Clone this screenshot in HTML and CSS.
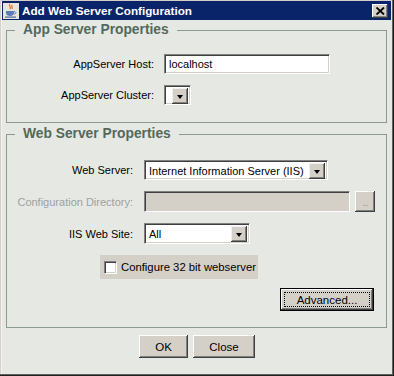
FILE: index.html
```html
<!DOCTYPE html>
<html>
<head>
<meta charset="utf-8">
<link rel="stylesheet" href="styles.css">
</head>
<body>
<div class="window">
  <div class="titlebar">
    <svg class="app-icon" width="16" height="16" viewBox="0 0 16 16">
      <rect x="0" y="0" width="16" height="16" fill="#e8e4dc"/>
      <path d="M7 1 C5 3 9 4 7 6 M9 2 C8 3.5 10 4.5 9 6" stroke="#e0701c" stroke-width="1.2" fill="none"/>
      <path d="M3 8 H11 V10 C11 12 9 13 7 13 C5 13 3 12 3 10 Z" fill="#5a7ab8"/>
      <path d="M11 8.5 C13.5 8.5 13.5 11 11 11" stroke="#5a7ab8" stroke-width="1" fill="none"/>
      <rect x="2" y="13.5" width="11" height="1.2" fill="#4a66a8"/>
    </svg>
    <span class="title">Add Web Server Configuration</span>
    <span class="close-btn"><svg width="9" height="8" viewBox="0 0 9 8"><path d="M0.5 0.5 L8 7.5 M8 0.5 L0.5 7.5" stroke="#000" stroke-width="1.8"/></svg></span>
  </div>
  <div class="body">
    <fieldset class="group group-app">
      <legend>App Server Properties</legend>
      <div class="form form-app">
        <label class="lbl">AppServer Host:</label>
        <div class="textfield host">localhost</div>
        <label class="lbl">AppServer Cluster:</label>
        <div class="combo cluster"><span class="combo-text"></span><span class="combo-arrow"><i></i></span></div>
      </div>
    </fieldset>
    <fieldset class="group group-web">
      <legend>Web Server Properties</legend>
      <div class="form form-web">
        <label class="lbl">Web Server:</label>
        <div class="combo webserver"><span class="combo-text">Internet Information Server (IIS)</span><span class="combo-arrow"><i></i></span></div>
        <label class="lbl disabled">Configuration Directory:</label>
        <div class="dir-row">
          <div class="textfield dir disabled-field"></div>
          <span class="btn dots">...</span>
        </div>
        <label class="lbl">IIS Web Site:</label>
        <div class="combo website"><span class="combo-text">All</span><span class="combo-arrow"><i></i></span></div>
        <div class="check-panel">
          <span class="checkbox"></span>
          <span class="check-label">Configure 32 bit webserver</span>
        </div>
        <div class="adv-row">
          <span class="btn default"><span class="focus">Advanced...</span></span>
        </div>
      </div>
    </fieldset>
    <div class="footer">
      <span class="btn ok">OK</span>
      <span class="btn close">Close</span>
    </div>
  </div>
</div>
</body>
</html>
```

FILE: styles.css
```css
html, body {
  margin: 0;
  padding: 0;
  background: #e6e9e3;
}
body {
  width: 394px;
  height: 376px;
  overflow: hidden;
  font-family: "Liberation Sans", Arial, sans-serif;
  font-size: 11px;
  color: #000;
}
.window {
  width: 394px;
  height: 376px;
  box-sizing: border-box;
  padding: 1px 3px 4px 2px;
  background: #e6e9e3;
  box-shadow: inset -1px -1px 0 #202020, inset -2px -2px 0 #606060, inset 1px 1px 0 #d4d0c8, inset 2px 2px 0 #f4f4f2;
  display: flex;
  flex-direction: column;
}
.titlebar {
  height: 19px;
  background: #0a246a;
  display: flex;
  align-items: center;
  padding: 0 2px 0 1px;
  flex: none;
}
.app-icon {
  flex: none;
  margin-right: 3px;
}
.title {
  color: #fff;
  font-weight: bold;
  font-size: 11.7px;
  flex: 1;
  white-space: nowrap;
}
.close-btn {
  width: 16px;
  height: 14px;
  box-sizing: border-box;
  background: #d4d0c8;
  display: flex;
  align-items: center;
  justify-content: center;
  box-shadow: inset -1px -1px 0 #404040, inset 1px 1px 0 #fff, inset -2px -2px 0 #808080;
  margin-right: 1px;
}
.body {
  flex: 1;
  display: flex;
  flex-direction: column;
  padding: 1px 4px 0 4px;
}
.group {
  margin: 0;
  padding: 0;
  border: 1px solid #8b9a8c;
  min-width: 0;
}
.group legend {
  margin-left: 8px;
  padding: 0 8px 0 8px;
  font-size: 13.8px;
  line-height: 18px;
  font-weight: bold;
  color: #55685a;
}
.group-web {
  margin-top: 2px;
}
.form {
  display: grid;
  align-items: center;
}
.form-app {
  grid-template-columns: 147px 1fr;
  column-gap: 10px;
  row-gap: 11px;
  padding: 15px 0 17px 0;
}
.form-web {
  grid-template-columns: 126px 1fr;
  column-gap: 11px;
  row-gap: 11px;
  padding: 17px 0 16px 0;
}
.lbl {
  text-align: right;
  white-space: nowrap;
}
.lbl.disabled {
  color: #a0a0a0;
}
.textfield {
  height: 20px;
  box-sizing: border-box;
  background: #fff;
  border-top: 1px solid #808080;
  border-left: 1px solid #808080;
  border-right: 1px solid #fff;
  border-bottom: 1px solid #fff;
  box-shadow: inset 1px 1px 0 #404040, inset -1px -1px 0 #d4d0c8;
  padding: 0 4px;
  line-height: 18px;
  white-space: nowrap;
}
.textfield.host {
  width: 166px;
}
.dir-row {
  display: flex;
  align-items: center;
  gap: 5px;
}
.textfield.dir {
  width: 206px;
  height: 21px;
}
.disabled-field {
  background: #d4d0c8;
}
.combo {
  height: 20px;
  box-sizing: border-box;
  background: #fff;
  border-top: 1px solid #808080;
  border-left: 1px solid #808080;
  border-right: 1px solid #fff;
  border-bottom: 1px solid #fff;
  box-shadow: inset 1px 1px 0 #404040, inset -1px -1px 0 #d4d0c8;
  display: flex;
  padding: 2px 2px 2px 2px;
}
.combo-text {
  flex: 1;
  line-height: 16px;
  padding-left: 2px;
  white-space: nowrap;
  overflow: hidden;
}
.combo-arrow {
  flex: none;
  width: 16px;
  height: 16px;
  box-sizing: border-box;
  background: #d4d0c8;
  box-shadow: inset -1px -1px 0 #404040, inset 1px 1px 0 #f0f0f0, inset -2px -2px 0 #808080;
  display: flex;
  align-items: center;
  justify-content: center;
}
.combo-arrow i {
  width: 0;
  height: 0;
  border-left: 3.5px solid transparent;
  border-right: 3.5px solid transparent;
  border-top: 4px solid #000;
  margin-top: 1px;
}
.combo.cluster {
  width: 27px;
}
.combo.webserver {
  width: 184px;
}
.combo.website {
  width: 106px;
  height: 21px;
}
.btn {
  box-sizing: border-box;
  background: #d4d0c8;
  box-shadow: inset -1px -1px 0 #404040, inset 1px 1px 0 #fff, inset -2px -2px 0 #808080;
  display: flex;
  align-items: center;
  justify-content: center;
  white-space: nowrap;
}
.btn.dots {
  width: 20px;
  height: 21px;
  color: #a0a0a0;
  font-size: 10px;
  line-height: 1;
  padding-top: 3px;
  letter-spacing: -1px;
}
.check-panel {
  grid-column: 1 / 3;
  justify-self: start;
  margin-left: 93px;
  width: 158px;
  height: 24px;
  box-sizing: border-box;
  background: #d4d0c8;
  display: flex;
  align-items: center;
  padding-left: 4px;
  gap: 4px;
  white-space: nowrap;
}
.checkbox {
  flex: none;
  width: 13px;
  height: 13px;
  box-sizing: border-box;
  background: #fff;
  border-top: 1px solid #808080;
  border-left: 1px solid #808080;
  border-right: 1px solid #fff;
  border-bottom: 1px solid #fff;
  box-shadow: inset 1px 1px 0 #404040, inset -1px -1px 0 #d4d0c8;
}
.check-label {
  font-size: 11.3px;
  white-space: nowrap;
}
.adv-row {
  grid-column: 1 / 3;
  display: flex;
  justify-content: flex-end;
  padding-right: 12px;
  margin-top: -2px;
}
.btn.default {
  width: 94px;
  height: 23px;
  border: 1px solid #000;
  padding: 3px;
}
.btn.default .focus {
  flex: 1;
  align-self: stretch;
  border: 1px dotted #000;
  display: flex;
  align-items: center;
  justify-content: center;
  font-size: 11.5px;
}
.footer {
  display: flex;
  justify-content: center;
  gap: 5px;
  margin-top: 7px;
  padding-left: 1px;
}
.btn.ok {
  width: 49px;
  height: 23px;
  font-size: 11.5px;
}
.btn.close {
  width: 62px;
  height: 23px;
  font-size: 11.5px;
}
```
